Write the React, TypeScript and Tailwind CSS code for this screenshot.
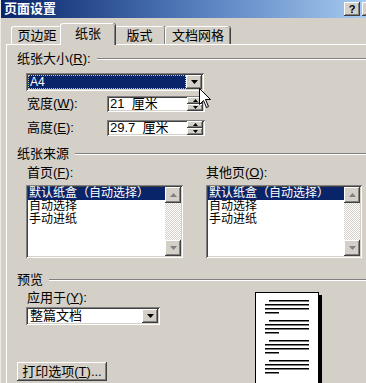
import React from "react";

const raised =
  "bg-[#d4d0c8] shadow-[inset_-1px_-1px_#404040,inset_1px_1px_#ffffff,inset_-2px_-2px_#808080]";
const sunken =
  "bg-white shadow-[inset_1px_1px_#808080,inset_-1px_-1px_#ffffff,inset_2px_2px_#404040,inset_-2px_-2px_#d4d0c8]";

function Acc({ text, k }: { text: string; k: string }) {
  return (
    <span>
      {text}(<u>{k}</u>):
    </span>
  );
}

function GroupHead({ children }: { children: React.ReactNode }) {
  return (
    <div className="flex items-center h-[14px] ml-[10px]">
      <span className="whitespace-nowrap">{children}</span>
      <div className="ml-[6px] flex-1 h-[2px] border-t border-t-[#808080] border-b border-b-white" />
    </div>
  );
}

function Arrow({ up, color = "#000" }: { up?: boolean; color?: string }) {
  return (
    <svg width="7" height="4" viewBox="0 0 7 4">
      <path d={up ? "M3.5 0 L7 4 L0 4 Z" : "M0 0 L7 0 L3.5 4 Z"} fill={color} />
    </svg>
  );
}

function SmallArrow({ up }: { up?: boolean }) {
  return (
    <svg width="5" height="3" viewBox="0 0 5 3">
      <path d={up ? "M2.5 0 L5 3 L0 3 Z" : "M0 0 L5 0 L2.5 3 Z"} fill="#000" />
    </svg>
  );
}

function DropBtn() {
  return (
    <div className={`${raised} w-[16px] h-full flex items-center justify-center`}>
      <Arrow />
    </div>
  );
}

function SpinField({ value }: { value: string }) {
  return (
    <div className={`${sunken} w-[98px] h-[16px] flex items-center pl-[3px] pr-[2px] py-[2px]`}>
      <span className="flex-1 text-[13px] leading-[12px] whitespace-pre">{value}</span>
      <div className="flex flex-col w-[16px] h-[14px] -my-[1px]">
        <div className={`${raised} flex-1 flex items-center justify-center`}>
          <SmallArrow up />
        </div>
        <div className={`${raised} flex-1 flex items-center justify-center`}>
          <SmallArrow />
        </div>
      </div>
    </div>
  );
}

function ListBox({ w }: { w: string }) {
  return (
    <div className={`${sunken} ${w} h-[73px] flex p-[2px]`}>
      <div className="flex-1 flex flex-col text-[12px] leading-[13px]">
        <div className="bg-[#0a246a] text-white whitespace-nowrap pl-[1px]">默认纸盒（自动选择）</div>
        <div className="pl-[1px]">自动选择</div>
        <div className="pl-[1px]">手动进纸</div>
      </div>
      <div className="w-[16px] flex flex-col bg-[repeating-conic-gradient(#d4d0c8_0%_25%,#ffffff_0%_50%)] bg-[length:2px_2px]">
        <div className={`${raised} h-[16px] flex items-center justify-center`}>
          <Arrow up color="#808080" />
        </div>
        <div className="flex-1" />
        <div className={`${raised} h-[16px] flex items-center justify-center`}>
          <Arrow color="#808080" />
        </div>
      </div>
    </div>
  );
}

function Tab({ label, active, w }: { label: string; active?: boolean; w: string }) {
  return (
    <div
      className={`${w} flex items-center justify-center border-t border-l border-white rounded-t-[3px] shadow-[inset_-1px_0_#808080,1px_0_#404040] bg-[#d4d0c8] ${
        active ? "h-[22px] -mx-[2px] z-10 mb-[-1px] pb-[1px]" : "h-[18px]"
      }`}
    >
      {label}
    </div>
  );
}

function PagePreview() {
  const groups = [0, 20, 40, 60];
  return (
    <div className="w-[64px] h-[100px] bg-white border border-black shadow-[3px_3px_0_#000]">
      <svg width="62" height="98" viewBox="0 0 62 98">
        {groups.map((g) => (
          <g key={g} fill="#000">
            <rect x="13" y={7 + g} width="40" height="1.5" />
            <rect x="9" y={11 + g} width="44" height="1.5" />
            <rect x="9" y={15 + g} width="44" height="1.5" />
            <rect x="9" y={19 + g} width="14" height="1.5" />
          </g>
        ))}
      </svg>
    </div>
  );
}

export default function App() {
  return (
    <div className="relative w-[366px] h-[383px] overflow-hidden bg-[#d4d0c8] text-black text-[13px] leading-[14px] font-['Liberation_Sans','Noto_Sans_CJK_SC',sans-serif] border-l border-l-[#ecebe6]">
      {/* title bar */}
      <div className="h-[18px] flex items-center justify-between pl-[3px] bg-gradient-to-r from-[#0a246a] via-[#5078b8] to-[#a6caf0]">
        <span className="text-white font-bold text-[13px]">页面设置</span>
        <div className="flex gap-[2px] mr-[-12px]">
          <div className={`${raised} w-[16px] h-[14px] flex items-center justify-center font-bold text-[11px] leading-none`}>
            ?
          </div>
          <div className={`${raised} w-[16px] h-[14px]`} />
        </div>
      </div>

      {/* tabs */}
      <div className="h-[26px] flex items-end pl-[10px]">
        <Tab label="页边距" w="w-[51px]" />
        <Tab label="纸张" active w="w-[55px]" />
        <Tab label="版式" w="w-[52px]" />
        <Tab label="文档网格" w="w-[65px]" />
      </div>

      {/* panel */}
      <div className="ml-[5px] border-t border-l border-white h-[400px]">
        <div className="pt-[7px]">
          <GroupHead>
            <Acc text="纸张大小" k="R" />
          </GroupHead>

          <div className={`${sunken} ml-[19px] mt-[7px] w-[178px] h-[18px] flex p-[2px]`}>
            <div className="flex-1 bg-[#0a246a] text-white text-[12px] leading-[12px] pl-[2px] flex items-center outline-1 outline-dotted outline-[#d8c880] -outline-offset-1">
              A4
            </div>
            <DropBtn />
          </div>

          <div className="flex items-center ml-[20px] mt-[5px]">
            <div className="w-[80px]">
              <Acc text="宽度" k="W" />
            </div>
            <SpinField value="21  厘米" />
          </div>
          <div className="flex items-center ml-[20px] mt-[8px]">
            <div className="w-[80px]">
              <Acc text="高度" k="E" />
            </div>
            <SpinField value="29.7  厘米" />
          </div>

          <div className="mt-[11px]">
            <GroupHead>纸张来源</GroupHead>
          </div>

          <div className="flex mt-[5px]">
            <div className="ml-[19px] flex flex-col">
              <div className="ml-[1px] h-[14px]">
                <Acc text="首页" k="F" />
              </div>
              <div className="mt-[5px]">
                <ListBox w="w-[157px]" />
              </div>
            </div>
            <div className="ml-[23px] flex flex-col">
              <div className="h-[14px]">
                <Acc text="其他页" k="O" />
              </div>
              <div className="mt-[5px]">
                <ListBox w="w-[156px]" />
              </div>
            </div>
          </div>

          <div className="mt-[15px]">
            <GroupHead>预览</GroupHead>
          </div>

          <div className="flex">
            <div className="ml-[10px] w-[238px] flex flex-col items-start">
              <div className="ml-[10px] mt-[4px] h-[14px]">
                <Acc text="应用于" k="Y" />
              </div>
              <div className={`${sunken} ml-[9px] mt-[2px] w-[134px] h-[18px] flex p-[2px]`}>
                <div className="flex-1 pl-[2px] flex items-center text-[13px]">整篇文档</div>
                <DropBtn />
              </div>
              <div className={`${raised} mt-[37px] w-[90px] h-[19px] flex items-center justify-center whitespace-nowrap`}>
                打印选项(<u>T</u>)...
              </div>
            </div>
            <div className="mt-[5px]">
              <PagePreview />
            </div>
          </div>
        </div>
      </div>

      {/* mouse cursor */}
      <svg className="absolute left-[198px] top-[88px]" width="13" height="21" viewBox="0 0 13 21">
        <path d="M0.5 0.5 L0.5 16.5 L4.5 12.5 L7.5 19.5 L9.5 18.5 L6.5 11.5 L11.5 11.5 Z" fill="#fff" stroke="#000" strokeWidth="1" />
      </svg>
    </div>
  );
}
